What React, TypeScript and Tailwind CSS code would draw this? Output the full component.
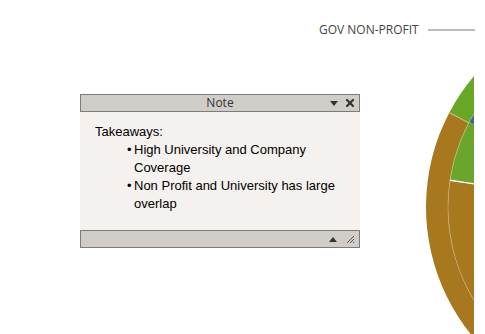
import React from "react";

const CX = 629;
const CY = 207;
const P = (r: number, a: number) => {
  const t = (a * Math.PI) / 180;
  return `${(CX + r * Math.cos(t)).toFixed(2)} ${(CY + r * Math.sin(t)).toFixed(2)}`;
};
const ring = (r0: number, r1: number, a1: number, a2: number) => {
  const large = a2 - a1 > 180 ? 1 : 0;
  if (r0 === 0) {
    return `M ${CX} ${CY} L ${P(r1, a1)} A ${r1} ${r1} 0 ${large} 1 ${P(r1, a2)} Z`;
  }
  return `M ${P(r1, a1)} A ${r1} ${r1} 0 ${large} 1 ${P(r1, a2)} L ${P(r0, a2)} A ${r0} ${r0} 0 ${large} 0 ${P(r0, a1)} Z`;
};

const BROWN = "#a8781f";
const GREEN = "#68a824";
const GREEN2 = "#6aa52c";
const BLUE = "#3c6a86";

function Chart() {
  return (
    <svg
      className="absolute left-0 top-0"
      width={474}
      height={334}
      viewBox="0 0 474 334"
    >
      <path d={ring(181, 203, 100, 207.7)} fill={BROWN} />
      <path d={ring(181, 203, 207.7, 260)} fill={GREEN} />
      <path d={ring(0, 181, 100, 188.5)} fill={BROWN} />
      <path d={ring(0, 181, 188.5, 208)} fill={GREEN2} />
      <path d={ring(0, 181, 208, 260)} fill={BLUE} />
      <path
        d={`M ${P(181, 120)} A 181 181 0 0 1 ${P(181, 188.5)}`}
        fill="none"
        stroke="#d2b27a"
        strokeWidth={0.6}
      />
      <path
        d={`M ${P(181, 188.5)} A 181 181 0 0 1 ${P(181, 215)}`}
        fill="none"
        stroke="#b9c98e"
        strokeWidth={0.6}
      />
      <path
        d={`M ${P(181, 207.7)} L ${P(203, 207.7)}`}
        stroke="#d9d2a0"
        strokeWidth={0.8}
      />
      <path
        d={`M ${P(150, 188.5)} L ${P(181, 188.5)}`}
        stroke="#ffffff"
        strokeWidth={1.4}
      />
    </svg>
  );
}

function Legend() {
  return (
    <div className="absolute left-[319px] top-[21px] flex items-center">
      <span
        className="text-[12px] leading-[18px] text-[#444]"
        style={{ fontFamily: '"Open Sans", "Noto Sans", sans-serif' }}
      >
        GOV NON-PROFIT
      </span>
      <div className="ml-[9px] h-[2px] w-[47px] bg-[#bdbdbd]" />
    </div>
  );
}

function NotePanel() {
  return (
    <div
      className="absolute left-[80px] top-[94px] flex w-[280px] flex-col"
      style={{ fontFamily: '"Liberation Sans", Arial, sans-serif' }}
    >
      <div className="relative flex h-[18px] items-center justify-center border border-[#7c7c7c] bg-[#d0cdc9]">
        <span
          className="text-[12px] leading-none text-[#333]"
          style={{ fontFamily: '"Open Sans", "Noto Sans", sans-serif' }}
        >
          Note
        </span>
        <div className="absolute right-[5px] top-0 flex h-full items-center gap-[8px]">
          <svg width="8" height="5" viewBox="0 0 8 5">
            <path d="M0 0 H8 L4 5 Z" fill="#333" />
          </svg>
          <svg width="8" height="8" viewBox="0 0 8 8">
            <path
              d="M1 1 L7 7 M7 1 L1 7"
              stroke="#333"
              strokeWidth={2.2}
              strokeLinecap="square"
            />
          </svg>
        </div>
      </div>
      <div className="h-[118px] bg-[#f4f1ee] pl-[15px] pt-[11px] text-[13px] leading-[18px] text-black">
        <div>Takeaways:</div>
        <ul className="ml-[32px] w-[220px]">
          <li className="relative pl-[7px]">
            <span className="absolute left-0 top-0">•</span>
            High University and Company Coverage
          </li>
          <li className="relative pl-[7px]">
            <span className="absolute left-0 top-0">•</span>
            Non Profit and University has large overlap
          </li>
        </ul>
      </div>
      <div className="relative h-[18px] border border-[#7c7c7c] bg-[#d0cdc9]">
        <div className="absolute right-[4px] top-0 flex h-full items-center gap-[9px]">
          <svg width="8" height="5" viewBox="0 0 8 5">
            <path d="M0 5 H8 L4 0 Z" fill="#333" />
          </svg>
          <svg width="9" height="9" viewBox="0 0 9 9">
            <path
              d="M8 1 L1 8 M8 4 L4 8 M8 7 L7 8"
              stroke="#555"
              strokeWidth={1}
            />
          </svg>
        </div>
      </div>
    </div>
  );
}

export default function App() {
  return (
    <div className="relative h-[334px] w-[485px] overflow-hidden bg-white">
      <Chart />
      <Legend />
      <NotePanel />
    </div>
  );
}
